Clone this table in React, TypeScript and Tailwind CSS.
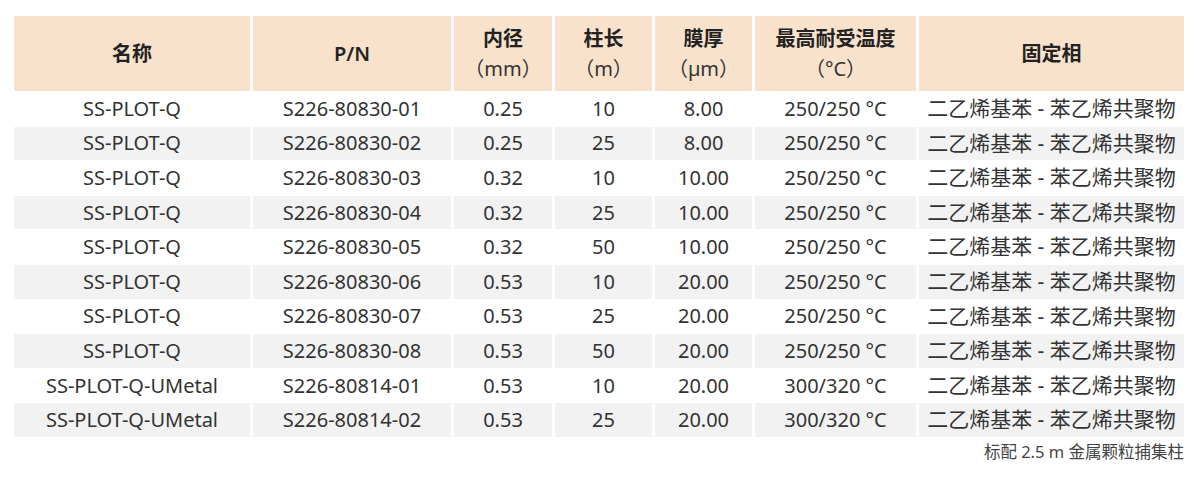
import React from 'react';

const cols = 'grid grid-cols-[236px_198px_98px_97px_97px_161px_265px] gap-x-[3px]';

interface Row {
  name: string;
  pn: string;
  id: string;
  len: string;
  film: string;
  temp: string;
}

const phase = '二乙烯基苯 - 苯乙烯共聚物';

const rows: Row[] = [
  { name: 'SS-PLOT-Q', pn: 'S226-80830-01', id: '0.25', len: '10', film: '8.00', temp: '250/250 °C' },
  { name: 'SS-PLOT-Q', pn: 'S226-80830-02', id: '0.25', len: '25', film: '8.00', temp: '250/250 °C' },
  { name: 'SS-PLOT-Q', pn: 'S226-80830-03', id: '0.32', len: '10', film: '10.00', temp: '250/250 °C' },
  { name: 'SS-PLOT-Q', pn: 'S226-80830-04', id: '0.32', len: '25', film: '10.00', temp: '250/250 °C' },
  { name: 'SS-PLOT-Q', pn: 'S226-80830-05', id: '0.32', len: '50', film: '10.00', temp: '250/250 °C' },
  { name: 'SS-PLOT-Q', pn: 'S226-80830-06', id: '0.53', len: '10', film: '20.00', temp: '250/250 °C' },
  { name: 'SS-PLOT-Q', pn: 'S226-80830-07', id: '0.53', len: '25', film: '20.00', temp: '250/250 °C' },
  { name: 'SS-PLOT-Q', pn: 'S226-80830-08', id: '0.53', len: '50', film: '20.00', temp: '250/250 °C' },
  { name: 'SS-PLOT-Q-UMetal', pn: 'S226-80814-01', id: '0.53', len: '10', film: '20.00', temp: '300/320 °C' },
  { name: 'SS-PLOT-Q-UMetal', pn: 'S226-80814-02', id: '0.53', len: '25', film: '20.00', temp: '300/320 °C' },
];

const headers: [string, string?][] = [
  ['名称'],
  ['P/N'],
  ['内径', '（mm）'],
  ['柱长', '（m）'],
  ['膜厚', '（µm）'],
  ['最高耐受温度', '（°C）'],
  ['固定相'],
];

function HeadCell({ top, sub }: { top: string; sub?: string }) {
  return (
    <div className="bg-[#f9e2cc] flex flex-col items-center justify-center leading-[30px]">
      <span className="font-semibold text-[#222]">{top}</span>
      {sub && <span className="text-[#333]">{sub}</span>}
    </div>
  );
}

export default function App() {
  return (
    <div
      className="w-[1200px] h-[479px] bg-white pt-4 pl-[14px] text-[20px] text-[#333]"
      style={{ fontFamily: '"Noto Sans", "Noto Sans CJK SC", sans-serif' }}
    >
      <div className={`${cols} h-[75px]`}>
        {headers.map(([top, sub]) => (
          <HeadCell key={top} top={top} sub={sub} />
        ))}
      </div>
      <div className="flex flex-col gap-y-px pt-px">
        {rows.map((r, i) => (
          <div
            key={r.pn}
            className={`${cols} h-[33.6px] items-stretch`}
          >
            {[r.name, r.pn, r.id, r.len, r.film, r.temp].map((v, j) => (
              <div
                key={j}
                className={`${i % 2 ? 'bg-[#f2f2f2]' : 'bg-white'} flex items-center justify-center whitespace-nowrap`}
              >
                {v}
              </div>
            ))}
            <div className={`${i % 2 ? 'bg-[#f2f2f2]' : 'bg-white'} flex items-center justify-center whitespace-nowrap text-[21px]`}>
              {phase}
            </div>
          </div>
        ))}
      </div>
      <div className="w-[1170px] text-right text-[16.5px] text-[#444] mt-[3px]">
        标配 2.5 m 金属颗粒捕集柱
      </div>
    </div>
  );
}
